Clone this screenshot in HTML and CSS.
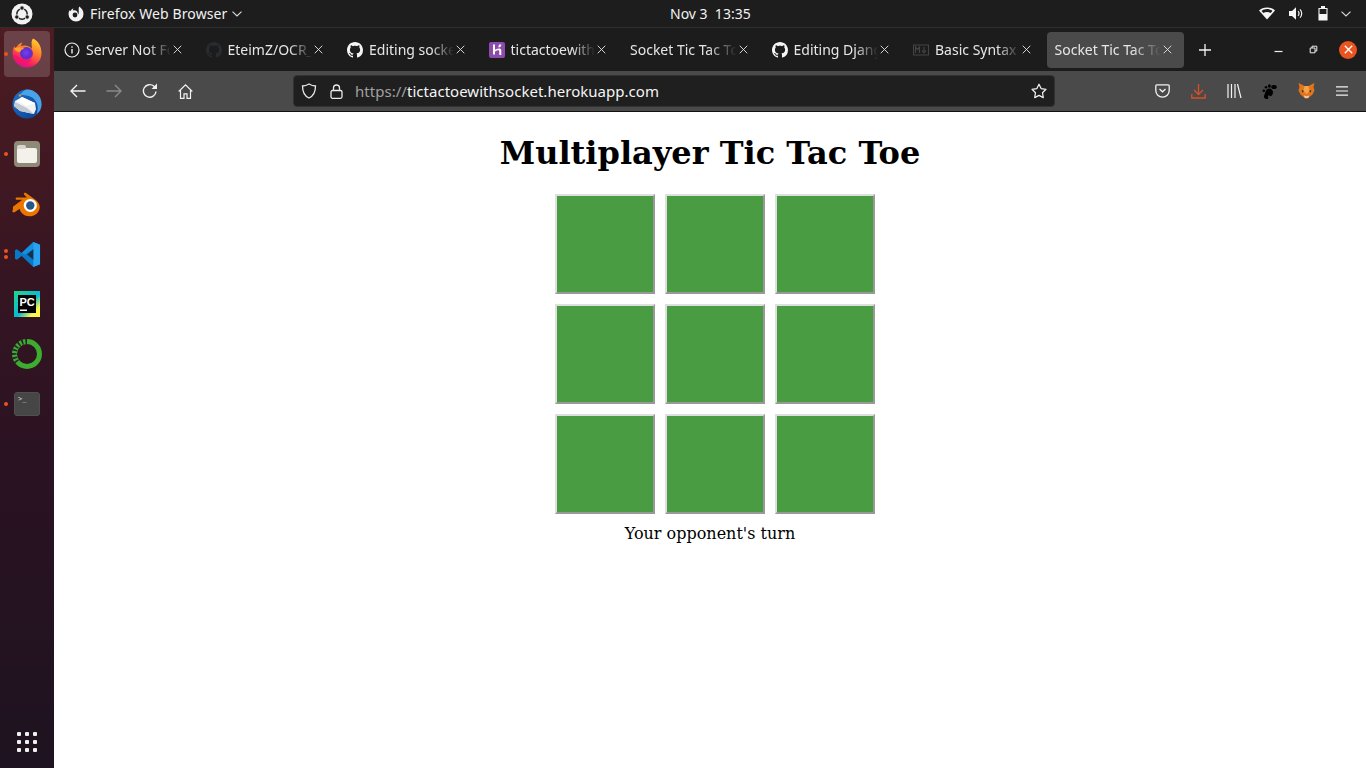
FILE: index.html
```html
<!DOCTYPE html>
<html lang="en">
<head>
<meta charset="utf-8">
<title>Multiplayer Tic Tac Toe</title>
<link rel="stylesheet" href="styles.css">
</head>
<body>
<svg class="sprite" aria-hidden="true">
  <defs>
    <symbol id="gh" viewBox="0 0 16 16"><path fill="currentColor" d="M8 0C3.58 0 0 3.58 0 8c0 3.54 2.29 6.53 5.47 7.59.4.07.55-.17.55-.38 0-.19-.01-.82-.01-1.49-2.01.37-2.53-.49-2.69-.94-.09-.23-.48-.94-.82-1.13-.28-.15-.68-.52-.01-.53.63-.01 1.08.58 1.23.82.72 1.21 1.87.87 2.33.66.07-.52.28-.87.51-1.07-1.78-.2-3.64-.89-3.64-3.95 0-.87.31-1.59.82-2.15-.08-.2-.36-1.02.08-2.12 0 0 .67-.21 2.2.82.64-.18 1.32-.27 2-.27.68 0 1.36.09 2 .27 1.53-1.04 2.2-.82 2.2-.82.44 1.1.16 1.92.08 2.12.51.56.82 1.27.82 2.15 0 3.07-1.87 3.75-3.65 3.95.29.25.54.73.54 1.48 0 1.07-.01 1.93-.01 2.2 0 .21.15.46.55.38A8.013 8.013 0 0016 8c0-4.42-3.58-8-8-8z"/></symbol>
    <symbol id="x" viewBox="0 0 10 10"><path d="M.8.8l8.400 8.400M9.200.8l-8.400 8.400" stroke="currentColor" stroke-width="1" fill="none"/></symbol>
  </defs>
</svg>

<header class="topbar">
  <div class="top-left">
    <svg class="ubuntu" width="22" height="22" viewBox="0 0 22 22"><circle cx="11" cy="11" r="10.500" fill="#f2f2f2"/><circle cx="11" cy="11" r="5.200" fill="none" stroke="#1d1d1d" stroke-width="1.500"/><circle cx="11" cy="5" r="2.200" fill="#1d1d1d" stroke="#f2f2f2" stroke-width=".9"/><circle cx="5.800" cy="14" r="2.200" fill="#1d1d1d" stroke="#f2f2f2" stroke-width=".9"/><circle cx="16.200" cy="14" r="2.200" fill="#1d1d1d" stroke="#f2f2f2" stroke-width=".9"/></svg>
    <svg class="app-mark" width="16" height="16" viewBox="0 0 16 16"><path fill="#f2f2f2" d="M11.200.6c1.900 1.200 4.300 3.600 4.300 7.400A7.500 7.500 0 0 1 .5 8c0-1.500.4-2.800 1.100-4 .1.600.4 1 .8 1.300C3 3.900 4.200 2.900 5.500 2.600c-.5.700-.7 1.300-.7 1.900.5-.2 1-.3 1.500-.3 2.200 0 3.600 1.700 3.600 3.700 0 .300 0 .500-.1.700.6-.4 1-1.100 1-2 0-2.300-.5-3.900.4-6z"/><circle cx="7" cy="9" r="2.400" fill="#1d1d1d"/></svg>
    <span class="app-name">Firefox Web Browser</span>
    <svg class="chev" width="10" height="6" viewBox="0 0 10 6"><path d="M.5.7 5 5l4.500-4.300" fill="none" stroke="#ddd" stroke-width="1.100"/></svg>
  </div>
  <div class="clock">Nov 3&nbsp;&nbsp;13:35</div>
  <div class="top-right">
    <svg width="16" height="13" viewBox="0 0 16 13"><path fill="#f5f5f5" d="M0 3.500C2 1.500 4.800.4 8 .4s6 1.100 8 3.100L8 12.600z"/><path fill="#1d1d1d" d="M2.600 3.900C4 2.800 6 2.100 8 2.100s4 .7 5.400 1.800L11.600 6C10.600 5.300 9.400 4.900 8 4.900s-2.600.4-3.600 1.100z"/></svg>
    <svg width="15" height="13" viewBox="0 0 15 13"><path fill="#f5f5f5" d="M0 4h3l4-3.700v12.400L3 9H0z"/><path fill="none" stroke="#f5f5f5" stroke-width="1.200" d="M9 4.200a3 3 0 0 1 0 4.600M11 2.300a6 6 0 0 1 0 8.400"/></svg>
    <svg width="10" height="15" viewBox="0 0 10 15"><path fill="none" stroke="#f5f5f5" stroke-width="1.100" d="M1 2.500h8V14H1z"/><path fill="#f5f5f5" d="M3 0h4v2H3zM1 8h8v6H1z"/></svg>
    <svg class="chev-r" width="10" height="6" viewBox="0 0 10 6"><path d="M.5.7 5 5l4.500-4.300" fill="none" stroke="#ddd" stroke-width="1.100"/></svg>
  </div>
</header>

<div class="desktop">
  <nav class="dock">
    <div class="dock-item active running">
      <svg width="30" height="30" viewBox="0 0 30 30">
        <defs>
          <linearGradient id="ffa" x1="0.75" y1="0" x2="0.25" y2="1"><stop offset="0" stop-color="#ffcf2e"/><stop offset=".4" stop-color="#ff7a2c"/><stop offset=".8" stop-color="#f5156c"/><stop offset="1" stop-color="#d01690"/></linearGradient>
          <radialGradient id="ffb" cx=".45" cy=".45" r=".6"><stop offset="0" stop-color="#7a3df0"/><stop offset=".65" stop-color="#5b2ecf"/><stop offset="1" stop-color="#b5259a"/></radialGradient>
        </defs>
        <path fill="url(#ffa)" d="M21 .5c5 2.500 8.500 7.500 8.500 14.500a14.500 14.500 0 0 1-29 0c0-3 .8-5.200 1.800-7 .3.9.8 1.600 1.500 2.200C5 7.500 7.500 5 10.500 4.500c-1 1.300-1.500 2.500-1.500 3.500 4-1.500 9 0 11 3 0-4-1.500-7 1-10.500z"/>
        <circle cx="14.500" cy="15.500" r="6.500" fill="url(#ffb)"/>
        <path fill="#ffa12c" d="M2 10.500c3-2 7-1.800 10.500.5-2.500 0-4 1.200-4.500 3-1.500 0-4 0-6-3.500z"/>
        <path fill="#f5156c" d="M1.500 17c2 5.500 6 8 11 8 3.500 0 6-1.500 8-4-2 1-4.500 1.200-7 .5-5-1.500-8-3-12-4.500z"/>
      </svg>
    </div>
    <div class="dock-item">
      <svg width="30" height="30" viewBox="0 0 30 30">
        <defs><linearGradient id="tb" x1="0" y1="0" x2="1" y2="1"><stop offset="0" stop-color="#1f74cc"/><stop offset="1" stop-color="#0b3f92"/></linearGradient></defs>
        <circle cx="15" cy="15" r="14.500" fill="url(#tb)"/>
        <path fill="#4aa3e8" d="M15 .5A14.500 14.500 0 0 1 29.500 15c0 5-2 8-5 10 1.500-4 2-9-1-13C21 8.500 18 6 8 6c2-3 4.500-5.500 7-5.500z"/>
        <path fill="#f2f2f2" d="M3 12 10 8l13 6 1 6-2 5-14-3-6-5z"/>
        <path fill="#c4c8d0" d="m3 13 12 6 7 6-14-3-6-5z"/>
        <path fill="#fff" d="M10 8l13 6-8 3-10-5z"/>
        <circle cx="8" cy="6.500" r="1.200" fill="#e8952b"/>
      </svg>
    </div>
    <div class="dock-item running">
      <span class="files"><span class="folder"></span></span>
    </div>
    <div class="dock-item">
      <svg width="30" height="25" viewBox="0 0 32 26"><path fill="#ea7600" d="M1 15.500 11 8 5 8c-1.500 0-1.500-2.500 0-2.500l11 0L13 2.500c-1.200-1.200.6-2.800 2-1.800l9.500 7C31 12 31 19 26 23c-5 3.800-13 3.300-16.500-2-.8-1.200-1.200-2.500-1.200-3.500L3 21c-2 1.500-3.500-1-2-2.500z"/><circle cx="19.500" cy="14" r="7" fill="#fff"/><circle cx="19.500" cy="14" r="4.500" fill="#265787"/></svg>
    </div>
    <div class="dock-item running double">
      <svg width="27" height="27" viewBox="0 0 28 28"><path fill="#0a78c8" d="M20 1 8 12.500 3 8.500 1 9.500v9l2 1 5-4L20 27l7-3V4z"/><path fill="#1590e0" d="M20 1 8 12.500 11 14l9-5.500z"/><path fill="#28a3f2" d="M20 1l7 3v20l-7 3z"/><path fill="#0a78c8" d="M3.500 11 7 14l-3.500 3z"/><path fill="#14304a" d="m20 8.500-6.500 5.500 6.500 5.500z"/></svg>
    </div>
    <div class="dock-item">
      <svg width="26" height="26" viewBox="0 0 26 26">
        <defs><linearGradient id="pc" x1="0" y1="0" x2="1" y2="1"><stop offset="0" stop-color="#21d789"/><stop offset=".55" stop-color="#09b9d6"/><stop offset=".8" stop-color="#fcf84a"/><stop offset="1" stop-color="#fcf84a"/></linearGradient></defs>
        <rect width="26" height="26" fill="url(#pc)"/><rect x="4" y="4" width="18" height="18" fill="#000"/>
        <text x="5.500" y="14.500" class="pc-text">PC</text>
        <rect x="6" y="18.500" width="7" height="1.500" fill="#fff"/>
      </svg>
    </div>
    <div class="dock-item">
      <svg width="30" height="30" viewBox="0 0 30 30"><circle cx="15" cy="15" r="12.500" fill="none" stroke="#3cad2e" stroke-width="5"/><path d="M15 2.500A12.500 12.500 0 0 0 6 24" fill="none" stroke="#2a2030" stroke-width="5" stroke-dasharray="1.600 2.200"/></svg>
    </div>
    <div class="dock-item running">
      <span class="term"><span class="term-prompt">&gt;_</span></span>
    </div>
    <div class="apps">
      <i></i><i></i><i></i><i></i><i></i><i></i><i></i><i></i><i></i>
    </div>
  </nav>

  <div class="browser">
    <div class="tabbar">
      <div class="tabs">
        <div class="tab">
          <svg class="fav" viewBox="0 0 16 16"><circle cx="8" cy="8" r="7" fill="none" stroke="#eee" stroke-width="1.200"/><path d="M8 7v4.500M8 4.300v1.500" stroke="#eee" stroke-width="1.400"/></svg>
          <span class="tab-title">Server Not Found</span>
          <svg class="tab-x"><use href="#x"/></svg>
        </div>
        <div class="tab">
          <svg class="fav dim"><use href="#gh"/></svg>
          <span class="tab-title">EteimZ/OCR_app</span>
          <svg class="tab-x"><use href="#x"/></svg>
        </div>
        <div class="tab">
          <svg class="fav"><use href="#gh"/></svg>
          <span class="tab-title">Editing socket</span>
          <svg class="tab-x"><use href="#x"/></svg>
        </div>
        <div class="tab">
          <svg class="fav" viewBox="0 0 16 16"><rect width="16" height="16" rx="2" fill="#8d4bab"/><path d="M4 2.500h2v5.300c1.500-.8 3-1.300 4.500-1.300 1.200 0 1.800.8 1.800 2v4.500h-2V9c0-.5-.2-.7-.7-.7-1 0-2.300.5-3.600 1.200v3H4z" fill="#fff"/><path d="M10 2.500h2.300c0 1-.4 2-1.300 2.700h-2c.6-.8 1-1.700 1-2.700z" fill="#fff"/></svg>
          <span class="tab-title">tictactoewithsocket</span>
          <svg class="tab-x"><use href="#x"/></svg>
        </div>
        <div class="tab nofav">
          <span class="tab-title">Socket Tic Tac Toe</span>
          <svg class="tab-x"><use href="#x"/></svg>
        </div>
        <div class="tab">
          <svg class="fav"><use href="#gh"/></svg>
          <span class="tab-title">Editing Django</span>
          <svg class="tab-x"><use href="#x"/></svg>
        </div>
        <div class="tab">
          <svg class="fav" viewBox="0 0 16 16"><rect x=".5" y="3" width="15" height="10" fill="none" stroke="#444" stroke-width="1"/><path d="M2.500 11V5l2 2.500L6.500 5v6M11 5v4M9 8.500l2 2.300 2-2.300" fill="none" stroke="#444" stroke-width="1.200"/></svg>
          <span class="tab-title">Basic Syntax</span>
          <svg class="tab-x"><use href="#x"/></svg>
        </div>
        <div class="tab nofav current">
          <span class="tab-title">Socket Tic Tac Toe</span>
          <svg class="tab-x"><use href="#x"/></svg>
        </div>
      </div>
      <svg class="newtab" width="12" height="12" viewBox="0 0 12 12"><path d="M6 0v12M0 6h12" stroke="#f5f5f5" stroke-width="1.300"/></svg>
      <div class="winctl">
        <svg width="9" height="9" viewBox="0 0 9 9"><path d="M.5 6.500h8" stroke="#eee" stroke-width="1.200"/></svg>
        <svg width="9" height="9" viewBox="0 0 9 9"><path d="M1.200 3h4.800v4.800H1.200zM3 3V1.200h4.800V6H6" fill="none" stroke="#eee" stroke-width="1"/></svg>
        <span class="close"><svg width="9" height="9" viewBox="0 0 9 9"><path d="m.8.800 7.400 7.400M8.200.800.800 8.200" stroke="#fff" stroke-width="1.300"/></svg></span>
      </div>
    </div>

    <div class="navbar">
      <div class="nav-left">
        <svg width="16" height="14" viewBox="0 0 16 14"><path d="M15.500 7H1M7 1 1 7l6 6" fill="none" stroke="#f2f2f2" stroke-width="1.400"/></svg>
        <svg class="off" width="16" height="14" viewBox="0 0 16 14"><path d="M.5 7H15M9 1l6 6-6 6" fill="none" stroke="#8a8a8a" stroke-width="1.400"/></svg>
        <svg width="16" height="16" viewBox="0 0 16 16"><path d="M14 8.500A6.300 6.300 0 1 1 12 3.300L14.300 5" fill="none" stroke="#f2f2f2" stroke-width="1.400"/><path d="M15 .5V6H9.500z" fill="#f2f2f2"/></svg>
        <svg width="15" height="15" viewBox="0 0 15 15"><path d="M.7 7.500 7.500.9l6.800 6.600M2.500 6.300v8h3.500v-4.500h3v4.500h3.500v-8" fill="none" stroke="#f2f2f2" stroke-width="1.200"/></svg>
      </div>
      <div class="urlbar">
        <svg width="16" height="16" viewBox="0 0 16 16"><path d="M8 1C5.800 2.300 3.500 3 1.500 3c0 6 1.500 9.800 6.500 12 5-2.200 6.500-6 6.500-12-2 0-4.300-.7-6.500-2z" fill="none" stroke="#eaeaea" stroke-width="1.300"/></svg>
        <svg class="lock" width="13" height="15" viewBox="0 0 13 15"><rect x="1" y="6.500" width="11" height="7.800" rx="1.500" fill="none" stroke="#eaeaea" stroke-width="1.300"/><path d="M3.500 6.500V4a3 3 0 0 1 6 0v2.500" fill="none" stroke="#eaeaea" stroke-width="1.300"/></svg>
        <span class="url"><span class="scheme">https://</span>tictactoewithsocket.herokuapp.com</span>
        <svg class="star" width="16" height="16" viewBox="0 0 16 16"><path d="m8 1.200 2.100 4.400 4.900.7-3.500 3.400.8 4.900L8 12.400l-4.300 2.200.8-4.900L1 6.300l4.900-.7z" fill="none" stroke="#f2f2f2" stroke-width="1.200" stroke-linejoin="round"/></svg>
      </div>
      <div class="nav-right">
        <svg width="15" height="14" viewBox="0 0 15 14"><path d="M1.800.8h11.400c.6 0 1 .4 1 1v4.700a6.700 6.700 0 0 1-13.400 0V1.800c0-.6.400-1 1-1z" fill="none" stroke="#f2f2f2" stroke-width="1.300"/><path d="m4.500 5 3 2.800 3-2.800" fill="none" stroke="#f2f2f2" stroke-width="1.300"/></svg>
        <svg width="15" height="15" viewBox="0 0 15 15"><path d="M7.500 0v10M3 6l4.500 4.500L12 6M.8 10v4h13.400v-4" fill="none" stroke="#d8502a" stroke-width="1.300"/></svg>
        <svg width="15" height="14" viewBox="0 0 15 14"><path d="M1 0v14M4.500 0v14M8 0v14M10.500 0l3.500 14" fill="none" stroke="#f2f2f2" stroke-width="1.200"/></svg>
        <svg width="15" height="15" viewBox="0 0 15 15"><path fill="#000" d="M4 15c-2.200-.4-2.600-2.500-1.600-4.200C3.500 9 3 7 5 5.200c2.600-1.500 6-.2 6 3.300-.1 2-1.500 3.800-3 3.800-.8 0-1-.7-.6-1.300-1 .3-1.800 1.200-1.200 2.400.5 1.200-.4 1.800-2.200 1.600z"/><circle cx="1.800" cy="6.800" r="1.300"/><circle cx="4" cy="3.300" r="1.300"/><ellipse cx="7.400" cy="2" rx="1.500" ry="1.700"/><ellipse cx="12" cy="3" rx="2.800" ry="2"/></svg>
        <svg width="17" height="16" viewBox="0 0 17 16"><path fill="#e2761b" d="M.5 0 6.500 3h4L16.500 0 15.500 4l1 3.500-2 4-3 2.500-1.500 1.500H7L5.500 14l-3-2.500-2-4L1.500 4z"/><path fill="#f6a24c" d="M6.500 3h4l1 5-3 3-3-3z"/><path fill="#2b2b2b" d="m3.500 7 2.500 1-1.500 1.500zM13.500 7 11 8l1.500 1.500z"/><path fill="#e8e2d9" d="m6 12.500 2.500 1 2.500-1-.8 2.300H6.800z"/></svg>
        <svg width="12" height="10" viewBox="0 0 12 10"><path d="M0 .8h12M0 5h12M0 9.200h12" stroke="#f2f2f2" stroke-width="1.200"/></svg>
      </div>
    </div>

    <main class="page">
      <h1>Multiplayer Tic Tac Toe</h1>
      <div class="board">
        <div class="cell"></div><div class="cell"></div><div class="cell"></div>
        <div class="cell"></div><div class="cell"></div><div class="cell"></div>
        <div class="cell"></div><div class="cell"></div><div class="cell"></div>
      </div>
      <p class="status">Your opponent's turn</p>
    </main>
  </div>
</div>
</body>
</html>
```

FILE: styles.css
```css
* { box-sizing: border-box; }

html, body {
  margin: 0;
  height: 100%;
  overflow: hidden;
}

body {
  display: flex;
  flex-direction: column;
  width: 1366px;
  height: 768px;
  background: #fff;
  font-family: "Noto Sans", "Open Sans", sans-serif;
  color: #f2f2f2;
}

.sprite {
  position: absolute;
  width: 0;
  height: 0;
}

svg { display: block; flex: none; }

/* top bar */
.topbar {
  height: 28px;
  flex: none;
  display: flex;
  align-items: center;
  background: #1d1d1d;
  border-bottom: 1px solid #2e2e2e;
  font-size: 14px;
}

.top-left {
  width: 670px;
  display: flex;
  align-items: center;
  padding-left: 11px;
}

.ubuntu { width: 22px; }

.app-mark { margin-left: 35px; }

.app-name {
  margin-left: 6px;
  letter-spacing: .11px;
}

.chev { margin-left: 5px; margin-top: 1px; }

.clock {
  width: 80px;
  text-align: center;
  white-space: nowrap;
}

.top-right {
  margin-left: auto;
  display: flex;
  align-items: center;
  gap: 14px;
  padding-right: 15px;
}

.chev-r { margin-left: -1px; }

/* layout */
.desktop {
  flex: 1;
  min-height: 0;
  display: flex;
}

/* dock */
.dock {
  width: 54px;
  flex: none;
  display: flex;
  flex-direction: column;
  padding-top: 1px;
  background: linear-gradient(180deg, #4e1c22 0%, #351522 35%, #2a1222 60%, #1e1320 100%);
}

.dock-item {
  position: relative;
  height: 50px;
  flex: none;
  display: flex;
  align-items: center;
  justify-content: center;
}

.dock-item.active::before {
  content: "";
  position: absolute;
  left: 4px;
  top: 2px;
  width: 46px;
  height: 46px;
  border-radius: 4px;
  background: rgba(255, 255, 255, .17);
}

.dock-item svg { position: relative; }

.dock-item.active svg { margin-top: -2px; }

.dock-item.running::after {
  content: "";
  position: absolute;
  left: 4px;
  top: 23px;
  width: 4px;
  height: 4px;
  border-radius: 50%;
  background: #e95420;
}

.dock-item.double::after {
  top: 20px;
  box-shadow: 0 6px 0 #e95420;
}

.files {
  width: 26px;
  height: 26px;
  border-radius: 4px;
  background: #8f8a78;
  display: flex;
  align-items: center;
  justify-content: center;
}

.folder {
  position: relative;
  width: 20px;
  height: 15px;
  margin-top: 2px;
  border-radius: 2px;
  background: #f4f1ec;
}

.folder::before {
  content: "";
  position: absolute;
  left: 0;
  top: -3px;
  width: 9px;
  height: 4px;
  border-radius: 2px 2px 0 0;
  background: #d9d5cc;
}

.term {
  width: 26px;
  height: 24px;
  border-radius: 3px;
  background: #464646;
  border: 1px solid #505050;
  color: #ddd;
  font-family: "DejaVu Sans Mono", monospace;
  font-size: 7px;
  line-height: 9px;
  padding: 2px 0 0 3px;
}

.pc-text {
  font: 700 11px "Liberation Sans", sans-serif;
  fill: #fff;
}

.apps {
  margin-top: auto;
  margin-bottom: 16px;
  align-self: center;
  display: grid;
  grid-template-columns: repeat(3, 4px);
  gap: 4px;
}

.apps i {
  width: 4px;
  height: 4px;
  background: #f0f0f0;
  border-radius: 1px;
}

/* browser */
.browser {
  flex: 1;
  min-width: 0;
  display: flex;
  flex-direction: column;
}

.tabbar {
  height: 43px;
  flex: none;
  display: flex;
  align-items: center;
  background: #1c1c1c;
}

.tabs {
  display: flex;
  gap: 4.5px;
  padding-left: 2.5px;
}

.tab {
  width: 137px;
  height: 36px;
  display: flex;
  align-items: center;
  padding: 0 12px 0 7.5px;
  border-radius: 4px;
  font-size: 14px;
  color: #e6e6e6;
}

.tab.current { background: #4a4a4a; }

.fav {
  width: 16px;
  height: 16px;
  margin-right: 6px;
  color: #f5f5f5;
}

.fav.dim { color: #272c33; }

.tab-title {
  flex: 1;
  min-width: 0;
  overflow: hidden;
  white-space: nowrap;
  -webkit-mask-image: linear-gradient(90deg, #000 72%, transparent 99%);
  mask-image: linear-gradient(90deg, #000 72%, transparent 99%);
}

.tab-x {
  width: 9px;
  height: 9px;
  margin-left: 1px;
  color: #e6e6e6;
}

.newtab { margin-left: 15px; }

.winctl {
  margin-left: auto;
  display: flex;
  align-items: center;
  gap: 26px;
  padding-right: 9px;
}

.close {
  width: 18px;
  height: 18px;
  margin-left: -5px;
  border-radius: 50%;
  background: #e95420;
  display: flex;
  align-items: center;
  justify-content: center;
}

.navbar {
  height: 41px;
  flex: none;
  display: flex;
  align-items: center;
  background: #4a4a4a;
  border-bottom: 1px solid #111;
}

.nav-left {
  display: flex;
  align-items: center;
  width: 239px;
  padding-left: 16px;
  gap: 20px;
}

.urlbar {
  width: 762px;
  height: 32px;
  display: flex;
  align-items: center;
  padding: 0 7px;
  background: #1f1f1f;
  border: 1px solid #333;
  border-radius: 4px;
  font-size: 15px;
  letter-spacing: .03px;
  color: #f5f5f5;
}

.lock { margin-left: 13px; }
.url { margin-left: 12px; white-space: nowrap; }
.scheme { color: #a0a0a0; }
.star { margin-left: auto; margin-right: 0; }

.nav-right {
  flex: 1;
  display: flex;
  align-items: center;
  justify-content: space-between;
  padding: 0 18px 0 100px;
}

/* page */
.page {
  flex: 1;
  min-height: 0;
  background: #fff;
  color: #000;
  font-family: "DejaVu Serif", serif;
  display: flex;
  flex-direction: column;
  align-items: center;
}

h1 {
  margin: 22px 0 22px;
  font-size: 32px;
  line-height: 38px;
  font-weight: 700;
}

.board {
  display: grid;
  grid-template-columns: repeat(3, 100px);
  grid-auto-rows: 100px;
  gap: 10px;
  margin-left: 10px;
}

.cell {
  background: #4a9c43;
  border: 2px solid;
  border-color: #dfdfdf #999 #999 #dfdfdf;
}

.status {
  margin: 10px 0 0;
  font-size: 16px;
  line-height: 19px;
}
```
